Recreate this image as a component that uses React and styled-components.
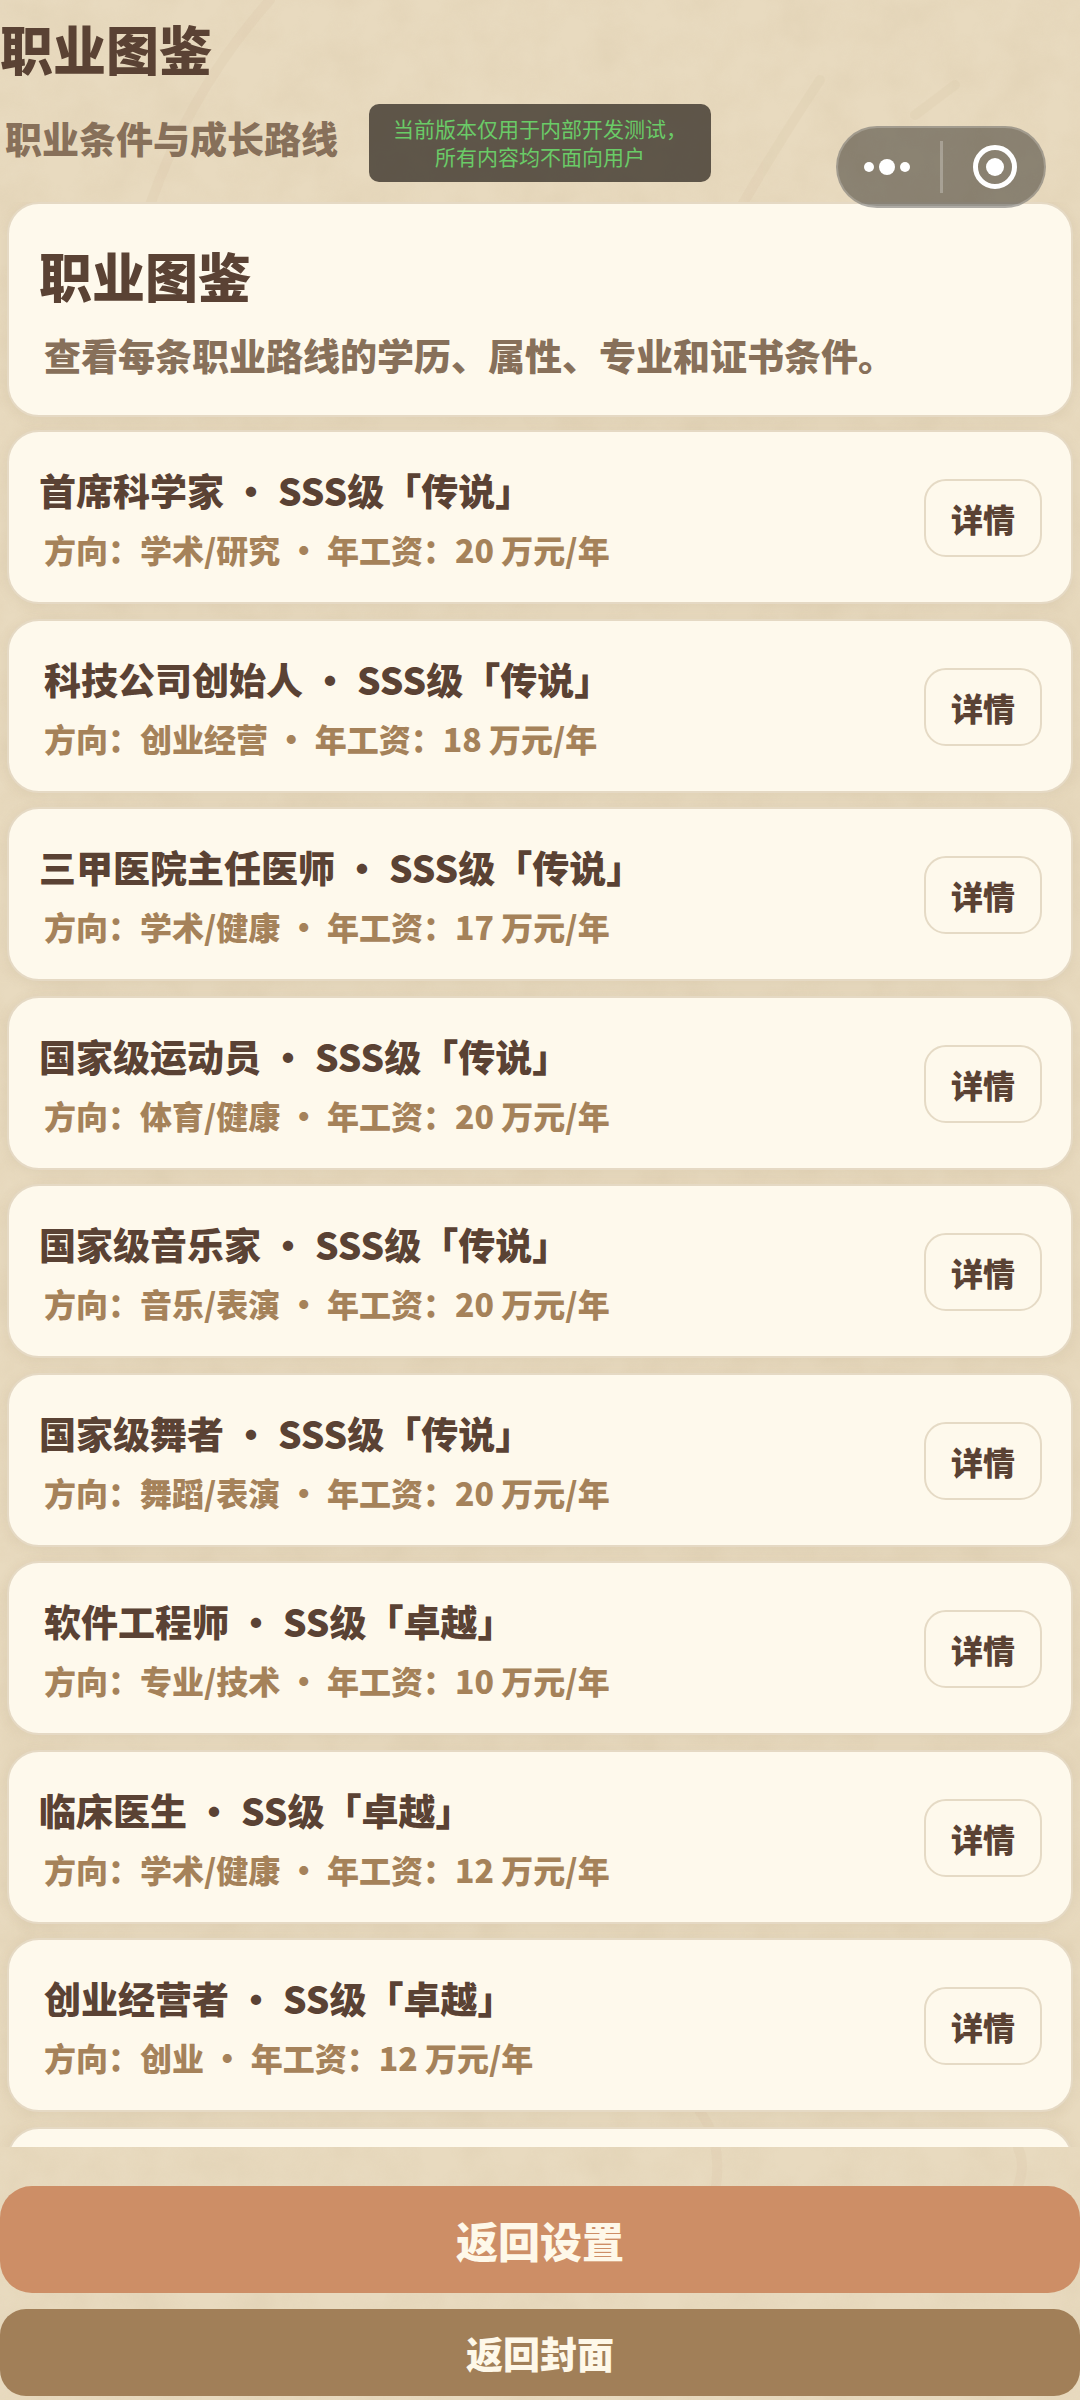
import React from 'react';
import styled, { createGlobalStyle } from 'styled-components';

const GlobalStyle = createGlobalStyle`
  * {
    box-sizing: border-box;
  }
  body {
    margin: 0;
    background: #e6d7bc;
    color: #5a4234;
    font-family: 'Noto Sans CJK SC', 'Noto Sans', sans-serif;
  }
  button {
    font-family: inherit;
    cursor: pointer;
  }
`;

const Page = styled.div`
  position: relative;
  isolation: isolate;
  display: flex;
  flex-direction: column;
  height: 100vh;
  padding-bottom: 4px;
`;

const Paper = styled.svg`
  position: absolute;
  inset: 0;
  z-index: -1;
  width: 100%;
  height: 100%;
`;

const Header = styled.header`
  display: flex;
  flex-direction: column;
  gap: 24px;
  padding: 12px 0 34px;
`;

const Heading = styled.h1`
  margin: 0;
  font-size: 53px;
  line-height: 72px;
  font-weight: 900;
`;

const Lead = styled.p`
  margin: 0;
  padding-left: 5px;
  color: #87705a;
  font-size: 37px;
  line-height: 60px;
  font-weight: 900;
`;

const Notice = styled.div`
  position: absolute;
  top: 104px;
  left: 50%;
  transform: translateX(-50%);
  padding: 10px 24px 12px;
  border-radius: 10px;
  background: rgba(60, 53, 44, 0.8);
  color: #6acb67;
  font-size: 21px;
  line-height: 28px;
  text-align: center;
  white-space: nowrap;
`;

const Capsule = styled.div`
  position: absolute;
  top: 126px;
  right: 34px;
  z-index: 2;
  display: flex;
  gap: 4px;
  align-items: center;
  width: 210px;
  height: 82px;
  border: 2px solid rgba(255, 255, 255, 0.2);
  border-radius: 41px;
  background: rgba(0, 0, 0, 0.4);
`;

const CapsuleButton = styled.button`
  display: flex;
  flex: 1;
  align-items: center;
  justify-content: center;
  height: 100%;
  padding: 0;
  border: 0;
  background: none;
`;

const CapsuleDivider = styled.span`
  width: 3px;
  height: 52px;
  background: rgba(255, 255, 255, 0.25);
`;

const Scroll = styled.main`
  flex: 1;
  min-height: 0;
  overflow: hidden;
  padding: 0 7px;
`;

const Card = styled.section`
  border: 2px solid #e5d9c4;
  border-radius: 32px;
  background: #fef9ec;
  box-shadow: 0 2px 14px rgba(120, 90, 50, 0.08);
`;

const Intro = styled(Card)`
  margin-bottom: 13px;
  padding: 35px 30px 30px;
`;

const IntroText = styled(Lead)`
  margin-top: 14px;
`;

const List = styled.ul`
  display: flex;
  flex-direction: column;
  gap: 14px;
  margin: 0;
  padding: 0;
  list-style: none;
`;

const Row = styled(Card).attrs({ as: 'li' })`
  display: flex;
  align-items: center;
  justify-content: space-between;
  height: 174px;
  padding: 2px 29px 0 30px;

  &:nth-child(odd) {
    margin-bottom: 1px;
  }
`;

const RowText = styled.div`
  padding-top: 2px;
`;

const Name = styled.h2`
  margin: 0;
  padding-left: ${(props) => (props.$inset ? '5px' : '0')};
  font-size: 37px;
  line-height: 60px;
  font-weight: 900;
`;

const Meta = styled.p`
  margin: 0;
  padding-left: 5px;
  color: #a5825a;
  font-size: 32px;
  line-height: 58px;
  font-weight: 900;
`;

const DetailButton = styled.button`
  height: 78px;
  padding: 0 25px;
  border: 2px solid #e5dac5;
  border-radius: 22px;
  background: transparent;
  color: #5a4234;
  font-size: 32px;
  line-height: 48px;
  font-weight: 900;
`;

const Footer = styled.footer`
  display: flex;
  flex-direction: column;
  gap: 16px;
  padding-top: 39px;
`;

const FooterButton = styled.button`
  width: 100%;
  height: ${(props) => (props.$primary ? '107px' : '87px')};
  padding: 0;
  border: 0;
  border-radius: ${(props) => (props.$primary ? '32px' : '26px')};
  background: ${(props) => (props.$primary ? '#cd8e66' : '#a17f58')};
  color: #fef8e9;
  font-size: ${(props) => (props.$primary ? '42px' : '37px')};
  line-height: 60px;
  font-weight: 900;
`;

const careers = [
  { name: '首席科学家', grade: 'SSS级「传说」', path: '学术/研究', salary: 20 },
  { name: '科技公司创始人', grade: 'SSS级「传说」', path: '创业经营', salary: 18, inset: true },
  { name: '三甲医院主任医师', grade: 'SSS级「传说」', path: '学术/健康', salary: 17 },
  { name: '国家级运动员', grade: 'SSS级「传说」', path: '体育/健康', salary: 20 },
  { name: '国家级音乐家', grade: 'SSS级「传说」', path: '音乐/表演', salary: 20 },
  { name: '国家级舞者', grade: 'SSS级「传说」', path: '舞蹈/表演', salary: 20 },
  { name: '软件工程师', grade: 'SS级「卓越」', path: '专业/技术', salary: 10, inset: true },
  { name: '临床医生', grade: 'SS级「卓越」', path: '学术/健康', salary: 12 },
  { name: '创业经营者', grade: 'SS级「卓越」', path: '创业', salary: 12, inset: true },
];

const PaperTexture = () => (
  <Paper aria-hidden="true">
    <filter id="grain" x="0" y="0" width="100%" height="100%">
      <feTurbulence type="fractalNoise" baseFrequency="0.022" numOctaves="4" seed="8" />
      <feColorMatrix values="0 0 0 0 0.62  0 0 0 0 0.5  0 0 0 0 0.32  0.5 0 0 0 -0.16" />
    </filter>
    <rect width="100%" height="100%" fill="#e8dabf" />
    <rect width="100%" height="100%" filter="url(#grain)" opacity="0.6" />
    <g fill="none" stroke="#cdb995" strokeWidth="10" strokeLinecap="round" opacity="0.12">
      <path d="M270 0 Q190 90 150 205" />
      <path d="M820 80 Q780 140 742 205" />
      <path d="M955 85 Q935 100 915 115" />
      <path d="M700 2112 Q722 2140 716 2186" />
      <path d="M1018 2148 Q1026 2165 1018 2186" />
    </g>
  </Paper>
);

const App = () => (
  <>
    <GlobalStyle />
    <Page>
      <PaperTexture />
      <Header>
        <Heading>职业图鉴</Heading>
        <Lead>职业条件与成长路线</Lead>
      </Header>

      <Notice>
        当前版本仅用于内部开发测试，
        <br />
        所有内容均不面向用户
      </Notice>

      <Capsule>
        <CapsuleButton type="button" aria-label="更多">
          <svg width="46" height="16" viewBox="0 0 46 16" fill="#fff">
            <circle cx="5" cy="8" r="5" />
            <circle cx="23" cy="8" r="8" />
            <circle cx="41" cy="8" r="5" />
          </svg>
        </CapsuleButton>
        <CapsuleDivider />
        <CapsuleButton type="button" aria-label="关闭">
          <svg width="44" height="44" viewBox="0 0 44 44">
            <circle cx="22" cy="22" r="19.5" fill="none" stroke="#fff" strokeWidth="5" />
            <circle cx="22" cy="22" r="9" fill="#fff" />
          </svg>
        </CapsuleButton>
      </Capsule>

      <Scroll>
        <Intro>
          <Heading as="h2">职业图鉴</Heading>
          <IntroText>查看每条职业路线的学历、属性、专业和证书条件。</IntroText>
        </Intro>
        <List>
          {careers.map((career) => (
            <Row key={career.name}>
              <RowText>
                <Name $inset={career.inset}>
                  {career.name} • {career.grade}
                </Name>
                <Meta>
                  方向：{career.path} • 年工资：{career.salary} 万元/年
                </Meta>
              </RowText>
              <DetailButton type="button">详情</DetailButton>
            </Row>
          ))}
          <Row />
        </List>
      </Scroll>

      <Footer>
        <FooterButton type="button" $primary>返回设置</FooterButton>
        <FooterButton type="button">返回封面</FooterButton>
      </Footer>
    </Page>
  </>
);

export default App;
